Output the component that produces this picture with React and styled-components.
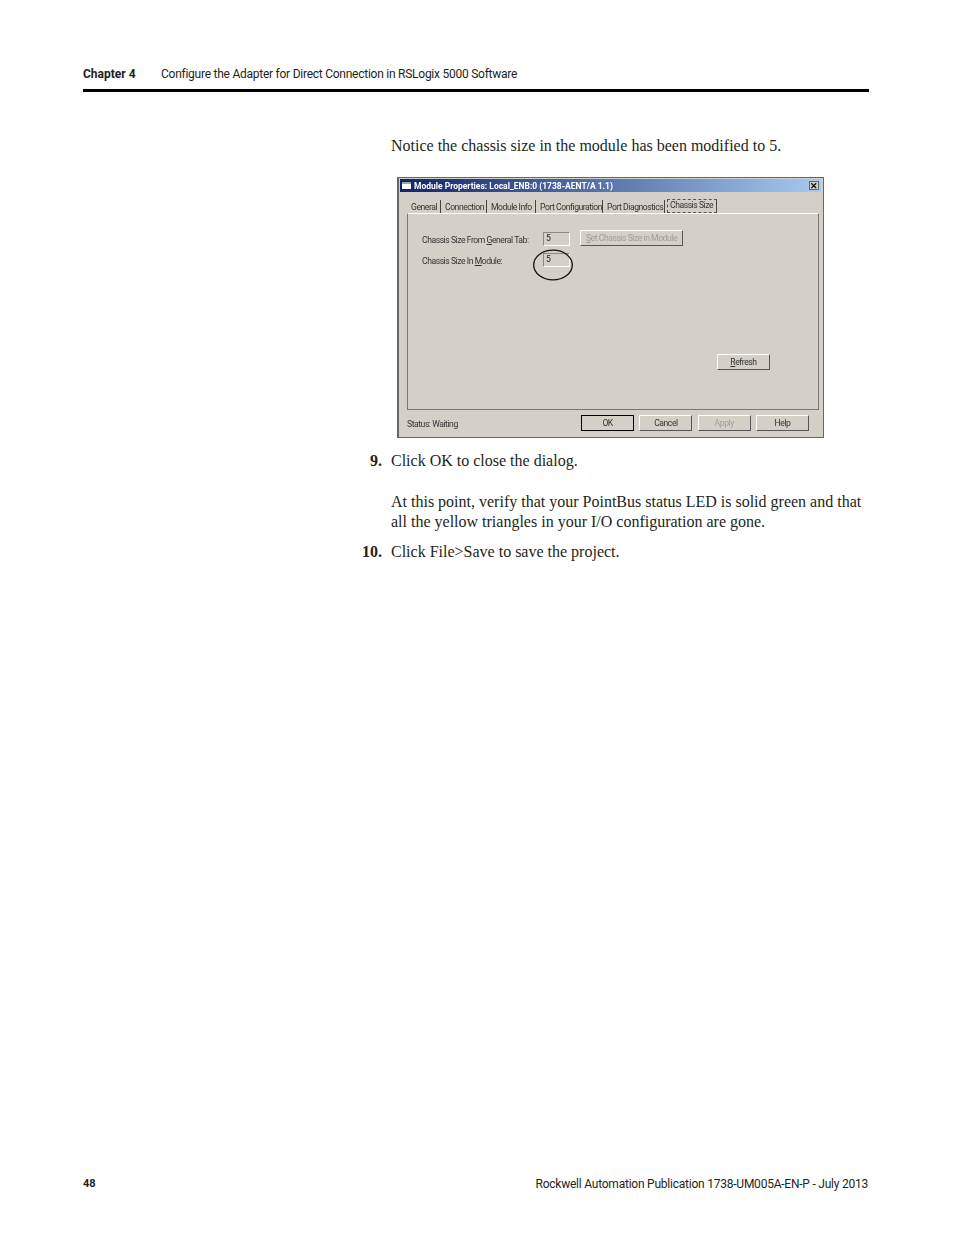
import React from "react";
import styled, { createGlobalStyle } from "styled-components";

const Global = createGlobalStyle`
  html, body { margin: 0; padding: 0; background: #fff; }
`;

const Page = styled.div`
  width: 954px;
  height: 1235px;
  box-sizing: border-box;
  padding: 66px 85px 0 83px;
  display: flex;
  flex-direction: column;
  position: relative;
  color: #231f20;
  overflow: hidden;
`;

const Header = styled.header`
  display: flex;
  align-items: baseline;
  height: 23px;
  border-bottom: 3px solid #000;
  font-family: "Roboto", "Liberation Sans", sans-serif;
  font-size: 12px;
  line-height: 16px;
`;

const ChapterLabel = styled.span`
  width: 78px;
  font-weight: 700;
`;

const ChapterTitle = styled.span`
  letter-spacing: -0.25px;
`;

const Content = styled.main`
  margin: 44px 0 0 308px;
  font-family: "Liberation Serif", serif;
  font-size: 16px;
  line-height: 20px;
`;

const Para = styled.p`
  margin: ${(p) => p.$top || 0}px 0 0;
`;

const Step = styled.div`
  display: grid;
  grid-template-columns: 30px 1fr;
  margin: ${(p) => p.$top || 0}px 0 0 -30px;
`;

const StepNo = styled.b`
  font-weight: 700;
  text-align: right;
  padding-right: 9px;
`;

const Dialog = styled.section`
  width: 427px;
  height: 261px;
  margin: 21px 0 0 6px;
  box-sizing: border-box;
  background: #d4d0c8;
  border: 1px solid #666;
  border-left-width: 2px;
  padding: 1px 2px 1px 1px;
  display: flex;
  flex-direction: column;
  font-family: "Roboto", "Liberation Sans", sans-serif;
  font-size: 8.6px;
  letter-spacing: -0.45px;
  color: #333;
  filter: blur(0.25px);
`;

const TitleBar = styled.div`
  height: 13px;
  display: flex;
  align-items: center;
  gap: 3px;
  padding: 0 2px;
  background: linear-gradient(90deg, #10246a, #a6caf0);
  color: #fff;
  font-size: 8.5px;
  font-weight: 700;
  letter-spacing: 0;
`;

const AppIcon = styled.span`
  width: 9px;
  height: 7px;
  background: #fff;
  border-top: 2px solid #9aa;
  box-sizing: border-box;
`;

const CloseBox = styled.span`
  margin-left: auto;
  width: 10px;
  height: 9px;
  display: flex;
  align-items: center;
  justify-content: center;
  background: #d4d0c8;
  border: 1px solid #666;
  box-sizing: border-box;
  color: #000;
`;

const Tabs = styled.div`
  display: flex;
  padding: 8px 0 0 9px;
  height: 21px;
  box-sizing: border-box;
  align-items: center;
`;

const Tab = styled.span`
  flex: none;
  box-sizing: border-box;
  width: ${(p) => p.$w}px;
  padding-left: 2px;
  height: 13px;
  line-height: 14px;
  border-right: 1px solid #444;
  margin-right: 2px;
  white-space: nowrap;
`;

const ActiveTab = styled(Tab)`
  outline: 1px dashed #555;
  outline-offset: -1px;
  height: 14px;
  line-height: 12px;
  padding-left: 3px;
  margin: -2px 0 0 0;
`;

const Panel = styled.div`
  flex: 1;
  margin: 0 2px 0 7px;
  border: 1px solid #777;
  border-top-color: #fff;
  box-sizing: border-box;
  padding: 18px 15px 0 14px;
  position: relative;
  display: flex;
  flex-direction: column;
`;

const FormRow = styled.div`
  display: flex;
  align-items: flex-start;
  height: 21px;
`;

const FieldLabel = styled.span`
  width: 121px;
  line-height: 12px;
  margin-top: 2px;
`;

const Field = styled.span`
  width: 27px;
  height: 14px;
  box-sizing: border-box;
  padding-left: 2px;
  line-height: 11px;
  border: 1px solid #888;
  border-right-color: #fff;
  border-bottom-color: #fff;
  color: #222;
`;

const Button = styled.span`
  flex: none;
  width: ${(p) => p.$w || 53}px;
  height: 16px;
  box-sizing: border-box;
  display: flex;
  align-items: center;
  justify-content: center;
  white-space: nowrap;
  background: #d4d0c8;
  border: 1px solid #fff;
  border-right-color: #555;
  border-bottom-color: #555;
  color: ${(p) => (p.$off ? "#a19d95" : "#333")};
`;

const SetButton = styled(Button)`
  margin: -2px 0 0 10px;
`;

const DefaultButton = styled(Button)`
  border: 1px solid #000;
`;

const RefreshWrap = styled.div`
  display: flex;
  justify-content: flex-end;
  margin-top: 80px;
  padding-right: 33px;
`;

const Ring = styled.svg`
  position: absolute;
  left: 124px;
  top: 34px;
`;

const StatusBar = styled.div`
  height: 26px;
  box-sizing: border-box;
  padding: 0 12px 1px 7px;
  display: flex;
  align-items: center;
  gap: 5.3px;
`;

const Status = styled.span`
  flex: 1;
  margin-top: 3px;
`;

const Footer = styled.footer`
  position: absolute;
  left: 83px;
  right: 86px;
  top: 1176px;
  display: flex;
  justify-content: space-between;
  font-family: "Roboto", "Liberation Sans", sans-serif;
  font-size: 12px;
  line-height: 16px;
`;

const PageNo = styled.b`
  font-weight: 700;
  font-size: 11px;
`;

const Pub = styled.span`
  letter-spacing: -0.23px;
`;

export default function App() {
  return (
    <Page>
      <Global />
      <Header>
        <ChapterLabel>Chapter 4</ChapterLabel>
        <ChapterTitle>Configure the Adapter for Direct Connection in RSLogix 5000 Software</ChapterTitle>
      </Header>
      <Content>
        <Para>Notice the chassis size in the module has been modified to 5.</Para>
        <Dialog>
          <TitleBar>
            <AppIcon />
            Module Properties: Local_ENB:0 (1738-AENT/A 1.1)
            <CloseBox>✕</CloseBox>
          </TitleBar>
          <Tabs>
            <Tab $w={32}>General</Tab>
            <Tab $w={44}>Connection</Tab>
            <Tab $w={47}>Module Info</Tab>
            <Tab $w={65}>Port Configuration</Tab>
            <Tab $w={60}>Port Diagnostics</Tab>
            <ActiveTab $w={50}>Chassis Size</ActiveTab>
          </Tabs>
          <Panel>
            <FormRow>
              <FieldLabel>Chassis Size From <u>G</u>eneral Tab:</FieldLabel>
              <Field>5</Field>
              <SetButton $w={103} $off><span><u>S</u>et Chassis Size in Module</span></SetButton>
            </FormRow>
            <FormRow>
              <FieldLabel>Chassis Size In <u>M</u>odule:</FieldLabel>
              <Field>5</Field>
            </FormRow>
            <Ring width="42" height="34" viewBox="0 0 42 34">
              <ellipse cx="21" cy="17" rx="19.3" ry="14.8" fill="none" stroke="#111" strokeWidth="1.3" />
            </Ring>
            <RefreshWrap>
              <Button><span><u>R</u>efresh</span></Button>
            </RefreshWrap>
          </Panel>
          <StatusBar>
            <Status>Status:  Waiting</Status>
            <DefaultButton>OK</DefaultButton>
            <Button>Cancel</Button>
            <Button $off>Apply</Button>
            <Button>Help</Button>
          </StatusBar>
        </Dialog>
        <Step $top={13}>
          <StepNo>9.</StepNo>
          <span>Click OK to close the dialog.</span>
        </Step>
        <Para $top={21}>
          At this point, verify that your PointBus status LED is solid green and that<br />
          all the yellow triangles in your I/O configuration are gone.
        </Para>
        <Step $top={10}>
          <StepNo>10.</StepNo>
          <span>Click File&gt;Save to save the project.</span>
        </Step>
      </Content>
      <Footer>
        <PageNo>48</PageNo>
        <Pub>Rockwell Automation Publication 1738-UM005A-EN-P - July 2013</Pub>
      </Footer>
    </Page>
  );
}
